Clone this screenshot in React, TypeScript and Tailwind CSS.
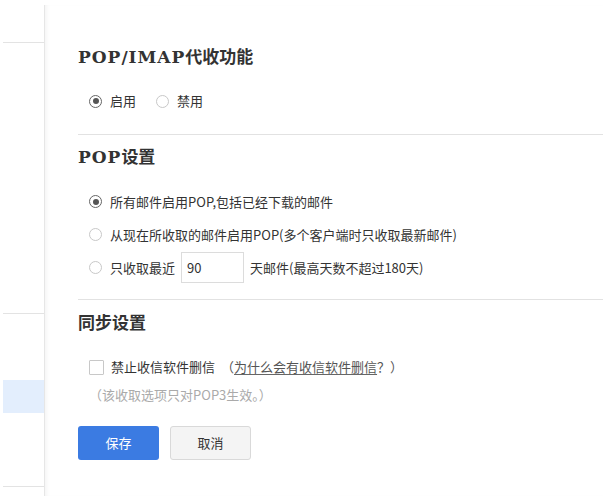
import React from "react";

const body = { fontFamily: '"Noto Sans CJK SC", "Noto Sans", sans-serif' };
const head = { fontFamily: '"DejaVu Serif", "Noto Sans CJK SC", serif' };

function Radio({ checked }: { checked?: boolean }) {
  return (
    <span
      className={
        "flex h-[13px] w-[13px] shrink-0 items-center justify-center rounded-full bg-white " +
        (checked ? "border-[1.5px] border-[#666]" : "border border-[#c8c8c8]")
      }
    >
      {checked && <span className="h-[6px] w-[6px] rounded-full bg-[#555]" />}
    </span>
  );
}

export default function App() {
  return (
    <div className="flex h-[496px] w-[603px] overflow-hidden bg-white text-[13px] text-[#333]" style={body}>
      {/* sidebar */}
      <div className="flex w-[44px] shrink-0 flex-col pl-[3px]">
        <div className="h-[42px]" />
        <div className="h-[271px] border-t border-[#e3e3e3]" />
        <div className="h-[67px] border-t border-[#e3e3e3]" />
        <div className="h-[33px] bg-[#e3eefd]" />
        <div className="h-[73px]" />
        <div className="h-[10px] border-t border-[#e3e3e3]" />
      </div>
      {/* main */}
      <div className="flex flex-1 flex-col">
        <div className="h-[5px]" />
        <div className="flex flex-1 flex-col border-l border-[#e6e6e6] pt-[41px] pl-[33px] shadow-[inset_4px_0_5px_-3px_rgba(0,0,0,0.06)]">
          <div className="flex h-[24px] items-center text-[17px] font-bold text-[#333]" style={head}>
            <span className="tracking-[1px]">POP/IMAP</span>代收功能
          </div>
          <div className="mt-[21px] flex h-[20px] items-center pl-[11px]">
            <Radio checked />
            <span className="ml-[8px]">启用</span>
            <span className="ml-[20px]">
              <Radio />
            </span>
            <span className="ml-[8px]">禁用</span>
          </div>
          <div className="mt-[23px] h-px bg-[#e2e2e2]" />
          <div className="mt-[11px] flex h-[24px] items-center text-[17px] font-bold text-[#333]" style={head}>
            <span className="tracking-[1px]">POP</span>设置
          </div>
          <div className="mt-[15px] flex flex-col pl-[11px]">
            <div className="flex h-[33px] items-center">
              <Radio checked />
              <span className="ml-[8px]">所有邮件启用POP,包括已经下载的邮件</span>
            </div>
            <div className="flex h-[33px] items-center">
              <Radio />
              <span className="ml-[8px]">从现在所收取的邮件启用POP(多个客户端时只收取最新邮件)</span>
            </div>
            <div className="flex h-[33px] items-center">
              <Radio />
              <span className="ml-[8px]">只收取最近</span>
              <div className="ml-[6px] flex h-[31px] w-[63px] items-center border border-[#dcdcdc] pl-[5px]">90</div>
              <span className="ml-[6px]">天邮件(最高天数不超过180天)</span>
            </div>
          </div>
          <div className="mt-[15px] h-px bg-[#e2e2e2]" />
          <div className="mt-[12px] flex h-[24px] items-center text-[17px] font-bold text-[#333]" style={head}>
            同步设置
          </div>
          <div className="mt-[21px] flex h-[20px] items-center pl-[11px]">
            <span className="h-[15px] w-[15px] shrink-0 rounded-[1px] border border-[#c8c8c8] bg-white" />
            <span className="ml-[7px]">禁止收信软件删信</span>
            <span className="ml-[6px] text-[#555]">
              （<span className="underline decoration-[#666] underline-offset-2">为什么会有收信软件删信</span>？）
            </span>
          </div>
          <div className="mt-[8px] flex h-[20px] items-center pl-[11px] text-[#aaa]">（该收取选项只对POP3生效。）</div>
          <div className="mt-[21px] flex gap-[11px]">
            <button className="flex h-[34px] w-[81px] items-center justify-center rounded-[3px] bg-[#3b7be2] text-[13px] text-white">
              保存
            </button>
            <button className="flex h-[34px] w-[81px] items-center justify-center rounded-[3px] border border-[#d9d9d9] bg-[#f4f4f4] text-[13px] text-[#333]">
              取消
            </button>
          </div>
        </div>
      </div>
    </div>
  );
}
